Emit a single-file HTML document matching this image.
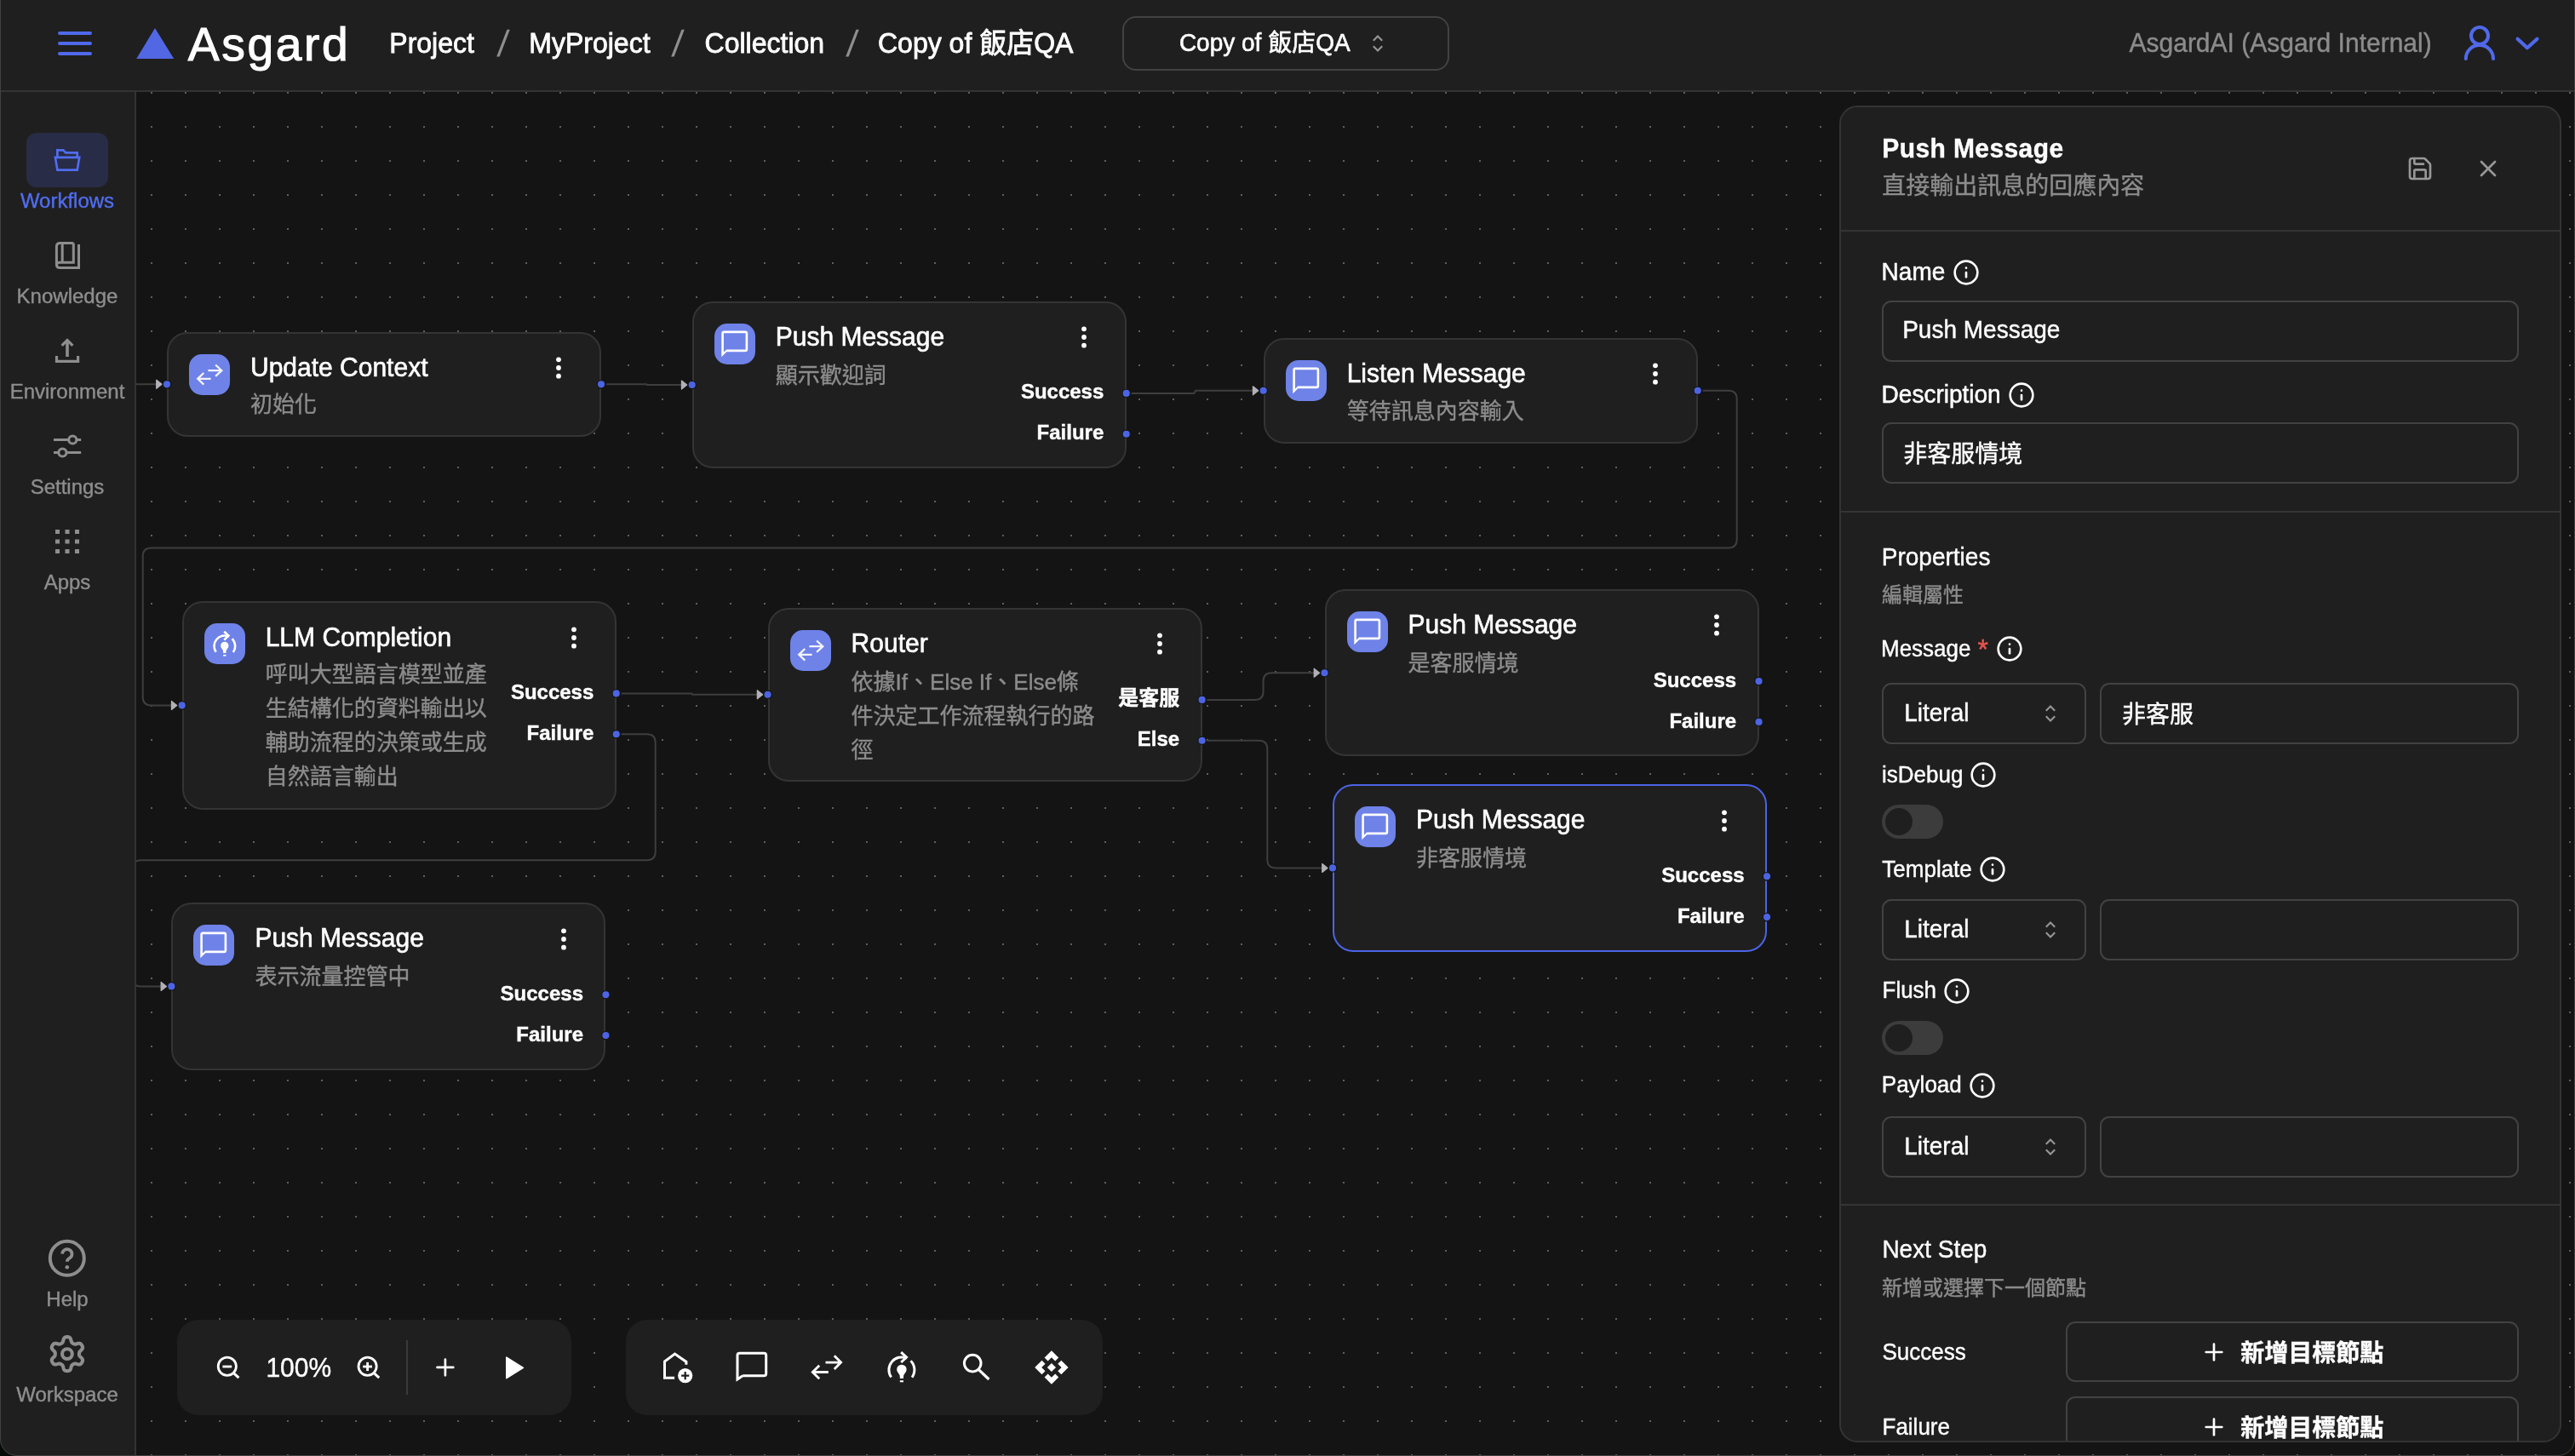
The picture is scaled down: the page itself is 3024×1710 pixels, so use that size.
<!DOCTYPE html>
<html lang="zh-Hant"><head><meta charset="utf-8"><title>Asgard - Copy of 飯店QA</title>
<style>
html,body{margin:0;padding:0;background:#141414;}
body{width:3024px;height:1710px;position:relative;overflow:hidden;font-family:"Liberation Sans","Noto Sans CJK TC",sans-serif;color:#fff;}
.a{position:absolute;box-sizing:border-box;}
#app{position:absolute;left:0;top:0;width:3024px;height:1710px;will-change:transform;}
.t{position:absolute;white-space:nowrap;line-height:1;-webkit-text-stroke:0.4px;}
svg{overflow:visible;}
</style></head><body><div id="app">
<svg class="a" style="left:0;top:0" width="3024" height="1710"><defs><pattern id="dots" x="177" y="108" width="40" height="40" patternUnits="userSpaceOnUse"><circle cx="1" cy="1" r="1" fill="#777"/></pattern></defs><rect x="160" y="108" width="2864" height="1602" fill="url(#dots)"/></svg>
<svg class="a" style="left:0;top:0" width="3024" height="1710"><path d="M146.00 451.35L168.00 451.35L168.00 451.35L190.00 451.35" fill="none" stroke="#3e3e3e" stroke-width="2"/><polygon points="183.75,446.35 190.00,451.35 183.75,456.35" fill="#b1b1b7" stroke="#b1b1b7" stroke-width="1.25" stroke-linejoin="round"/><path d="M712.00 451.35L759.03 451.35Q759.35 451.35 759.35 451.68L759.35 451.68Q759.35 452.00 759.67 452.00L806.70 452.00" fill="none" stroke="#3e3e3e" stroke-width="2"/><polygon points="800.45,447.00 806.70,452.00 800.45,457.00" fill="#b1b1b7" stroke="#b1b1b7" stroke-width="1.25" stroke-linejoin="round"/><path d="M1328.70 461.90L1401.62 461.90Q1403.20 461.90 1403.20 460.32L1403.20 460.32Q1403.20 458.75 1404.78 458.75L1477.70 458.75" fill="none" stroke="#3e3e3e" stroke-width="2"/><polygon points="1471.45,453.75 1477.70,458.75 1471.45,463.75" fill="#b1b1b7" stroke="#b1b1b7" stroke-width="1.25" stroke-linejoin="round"/><path d="M1999.70 458.75L2029.70 458.75Q2039.70 458.75 2039.70 468.75L2039.70 633.58Q2039.70 643.58 2029.70 643.58L177.70 643.58Q167.70 643.58 167.70 653.58L167.70 818.40Q167.70 828.40 177.70 828.40L207.70 828.40" fill="none" stroke="#3e3e3e" stroke-width="2"/><polygon points="201.45,823.40 207.70,828.40 201.45,833.40" fill="#b1b1b7" stroke="#b1b1b7" stroke-width="1.25" stroke-linejoin="round"/><path d="M729.70 814.40L812.00 814.40Q812.65 814.40 812.65 815.05L812.65 815.05Q812.65 815.70 813.30 815.70L895.60 815.70" fill="none" stroke="#3e3e3e" stroke-width="2"/><polygon points="889.35,810.70 895.60,815.70 889.35,820.70" fill="#b1b1b7" stroke="#b1b1b7" stroke-width="1.25" stroke-linejoin="round"/><path d="M729.70 862.20L759.70 862.20Q769.70 862.20 769.70 872.20L769.70 1000.30Q769.70 1010.30 759.70 1010.30L165.40 1010.30Q155.40 1010.30 155.40 1020.30L155.40 1148.40Q155.40 1158.40 165.40 1158.40L195.40 1158.40" fill="none" stroke="#3e3e3e" stroke-width="2"/><polygon points="189.15,1153.40 195.40,1158.40 189.15,1163.40" fill="#b1b1b7" stroke="#b1b1b7" stroke-width="1.25" stroke-linejoin="round"/><path d="M1417.60 821.90L1473.55 821.90Q1483.55 821.90 1483.55 811.90L1483.55 800.20Q1483.55 790.20 1493.55 790.20L1549.50 790.20" fill="none" stroke="#3e3e3e" stroke-width="2"/><polygon points="1543.25,785.20 1549.50,790.20 1543.25,795.20" fill="#b1b1b7" stroke="#b1b1b7" stroke-width="1.25" stroke-linejoin="round"/><path d="M1417.60 869.70L1478.30 869.70Q1488.30 869.70 1488.30 879.70L1488.30 1009.40Q1488.30 1019.40 1498.30 1019.40L1559.00 1019.40" fill="none" stroke="#3e3e3e" stroke-width="2"/><polygon points="1552.75,1014.40 1559.00,1019.40 1552.75,1024.40" fill="#b1b1b7" stroke="#b1b1b7" stroke-width="1.25" stroke-linejoin="round"/></svg>
<div class="a" style="left:196.00px;top:389.60px;width:510.00px;height:123.50px;background:#1f1f1f;border:2px solid #343434;border-radius:24px;"></div>
<div class="a" style="left:222.00px;top:415.60px;width:48.00px;height:48.00px;background:#6e82e8;border-radius:15px;"></div>
<svg class="a" style="left:222.00px;top:415.60px;" width="48" height="48" viewBox="0 0 48 48"><path d="M22.4 19.2H38.3M31.1 12.5L38.3 19.2L31.1 25.9M25.6 28.8H10.2M17.3 22L10.2 28.8L17.3 35.6" fill="none" stroke="#f3f4ff" stroke-width="2.3"/></svg>
<div class="t" style="top:416.90px;font-size:30px;color:#fff;transform:scaleY(1.03);transform-origin:0 25px;left:294.00px;-webkit-text-stroke:0.6px;">Update Context</div>
<div class="t" style="top:461.95px;font-size:26px;color:#8c8c8c;left:294.00px;">初始化</div>
<svg class="a" style="left:651.20px;top:417.00px;" width="10" height="30" viewBox="0 0 10 30"><circle cx="5" cy="5.300000000000001" r="2.9" fill="#fff"/><circle cx="5" cy="15" r="2.9" fill="#fff"/><circle cx="5" cy="24.7" r="2.9" fill="#fff"/></svg>
<div class="a" style="left:812.70px;top:353.70px;width:510.00px;height:196.60px;background:#1f1f1f;border:2px solid #343434;border-radius:24px;"></div>
<div class="a" style="left:838.70px;top:379.70px;width:48.00px;height:48.00px;background:#6e82e8;border-radius:15px;"></div>
<svg class="a" style="left:838.70px;top:379.70px;" width="48" height="48" viewBox="0 0 48 48"><path fill="#fff" fill-rule="evenodd" d="M11.3 8.6H36.2Q39.2 8.6 39.2 11.6V30.200000000000003Q39.2 33.2 36.2 33.2H14.3L8.3 39.2V11.6Q8.3 8.6 11.3 8.6ZM10.9 11.2H36.6V30.6H14.100000000000001L10.9 33.800000000000004Z"/></svg>
<div class="t" style="top:381.00px;font-size:30px;color:#fff;transform:scaleY(1.03);transform-origin:0 25px;left:910.70px;-webkit-text-stroke:0.6px;">Push Message</div>
<div class="t" style="top:427.85px;font-size:26px;color:#8c8c8c;left:910.70px;">顯示歡迎詞</div>
<svg class="a" style="left:1267.90px;top:381.10px;" width="10" height="30" viewBox="0 0 10 30"><circle cx="5" cy="5.300000000000001" r="2.9" fill="#fff"/><circle cx="5" cy="15" r="2.9" fill="#fff"/><circle cx="5" cy="24.7" r="2.9" fill="#fff"/></svg>
<div class="t" style="top:448.30px;font-size:24px;color:#fff;transform:scaleY(1.03);transform-origin:100% 20px;font-weight:700;right:1727.70px;">Success</div>
<div class="t" style="top:496.30px;font-size:24px;color:#fff;transform:scaleY(1.03);transform-origin:100% 20px;font-weight:700;right:1727.70px;">Failure</div>
<div class="a" style="left:1483.70px;top:397.00px;width:510.00px;height:123.50px;background:#1f1f1f;border:2px solid #343434;border-radius:24px;"></div>
<div class="a" style="left:1509.70px;top:423.00px;width:48.00px;height:48.00px;background:#6e82e8;border-radius:15px;"></div>
<svg class="a" style="left:1509.70px;top:423.00px;" width="48" height="48" viewBox="0 0 48 48"><path fill="#fff" fill-rule="evenodd" d="M11.3 8.6H36.2Q39.2 8.6 39.2 11.6V30.200000000000003Q39.2 33.2 36.2 33.2H14.3L8.3 39.2V11.6Q8.3 8.6 11.3 8.6ZM10.9 11.2H36.6V30.6H14.100000000000001L10.9 33.800000000000004Z"/></svg>
<div class="t" style="top:424.30px;font-size:30px;color:#fff;transform:scaleY(1.03);transform-origin:0 25px;left:1581.70px;-webkit-text-stroke:0.6px;">Listen Message</div>
<div class="t" style="top:469.85px;font-size:26px;color:#8c8c8c;left:1581.70px;">等待訊息內容輸入</div>
<svg class="a" style="left:1938.90px;top:424.40px;" width="10" height="30" viewBox="0 0 10 30"><circle cx="5" cy="5.300000000000001" r="2.9" fill="#fff"/><circle cx="5" cy="15" r="2.9" fill="#fff"/><circle cx="5" cy="24.7" r="2.9" fill="#fff"/></svg>
<div class="a" style="left:213.70px;top:706.20px;width:510.00px;height:244.40px;background:#1f1f1f;border:2px solid #343434;border-radius:24px;"></div>
<div class="a" style="left:239.70px;top:732.20px;width:48.00px;height:48.00px;background:#6e82e8;border-radius:15px;"></div>
<svg class="a" style="left:239.70px;top:732.20px;" width="48" height="48" viewBox="0 0 48 48"><path d="M13.72 33.85A12.30 12.30 0 0 1 28.80 15.56" fill="none" stroke="#fff" stroke-width="2.6"/><path d="M32.50 18.10A12.30 12.30 0 0 1 33.75 34.03" fill="none" stroke="#fff" stroke-width="2.6"/><path d="M23.20 9.70L28.40 14.60L23.20 19.50" fill="none" stroke="#fff" stroke-width="2.6"/><path d="M19.10 26.40a4.70 4.70 0 0 1 9.40 0c0 2.40 -2.10 3.60 -2.80 5.60l-0.30 3.00h-3.20l-0.30 -3.00c-0.70 -2.00 -2.80 -3.20 -2.80 -5.60z" fill="#fff"/><rect x="22.10" y="36.90" width="3.40" height="1.70" fill="#fff"/></svg>
<div class="t" style="top:733.50px;font-size:30px;color:#fff;transform:scaleY(1.03);transform-origin:0 25px;left:311.70px;-webkit-text-stroke:0.6px;">LLM Completion</div>
<div class="t" style="top:779.15px;font-size:26px;color:#8c8c8c;left:311.70px;">呼叫大型語言模型並產</div>
<div class="t" style="top:819.15px;font-size:26px;color:#8c8c8c;left:311.70px;">生結構化的資料輸出以</div>
<div class="t" style="top:859.15px;font-size:26px;color:#8c8c8c;left:311.70px;">輔助流程的決策或生成</div>
<div class="t" style="top:899.15px;font-size:26px;color:#8c8c8c;left:311.70px;">自然語言輸出</div>
<svg class="a" style="left:668.90px;top:733.60px;" width="10" height="30" viewBox="0 0 10 30"><circle cx="5" cy="5.300000000000001" r="2.9" fill="#fff"/><circle cx="5" cy="15" r="2.9" fill="#fff"/><circle cx="5" cy="24.7" r="2.9" fill="#fff"/></svg>
<div class="t" style="top:800.80px;font-size:24px;color:#fff;transform:scaleY(1.03);transform-origin:100% 20px;font-weight:700;right:2326.70px;">Success</div>
<div class="t" style="top:848.80px;font-size:24px;color:#fff;transform:scaleY(1.03);transform-origin:100% 20px;font-weight:700;right:2326.70px;">Failure</div>
<div class="a" style="left:901.60px;top:713.70px;width:510.00px;height:204.00px;background:#1f1f1f;border:2px solid #343434;border-radius:24px;"></div>
<div class="a" style="left:927.60px;top:739.70px;width:48.00px;height:48.00px;background:#6e82e8;border-radius:15px;"></div>
<svg class="a" style="left:927.60px;top:739.70px;" width="48" height="48" viewBox="0 0 48 48"><path d="M22.4 19.2H38.3M31.1 12.5L38.3 19.2L31.1 25.9M25.6 28.8H10.2M17.3 22L10.2 28.8L17.3 35.6" fill="none" stroke="#f3f4ff" stroke-width="2.3"/></svg>
<div class="t" style="top:741.00px;font-size:30px;color:#fff;transform:scaleY(1.03);transform-origin:0 25px;left:999.60px;-webkit-text-stroke:0.6px;">Router</div>
<div class="t" style="top:787.55px;font-size:26px;color:#8c8c8c;left:999.60px;">依據If、Else If、Else條</div>
<div class="t" style="top:827.55px;font-size:26px;color:#8c8c8c;left:999.60px;">件決定工作流程執行的路</div>
<div class="t" style="top:867.55px;font-size:26px;color:#8c8c8c;left:999.60px;">徑</div>
<svg class="a" style="left:1356.80px;top:741.10px;" width="10" height="30" viewBox="0 0 10 30"><circle cx="5" cy="5.300000000000001" r="2.9" fill="#fff"/><circle cx="5" cy="15" r="2.9" fill="#fff"/><circle cx="5" cy="24.7" r="2.9" fill="#fff"/></svg>
<div class="t" style="top:808.30px;font-size:24px;color:#fff;font-weight:700;right:1638.80px;">是客服</div>
<div class="t" style="top:856.30px;font-size:24px;color:#fff;transform:scaleY(1.03);transform-origin:100% 20px;font-weight:700;right:1638.80px;">Else</div>
<div class="a" style="left:1555.50px;top:691.90px;width:510.00px;height:196.60px;background:#1f1f1f;border:2px solid #343434;border-radius:24px;"></div>
<div class="a" style="left:1581.50px;top:717.90px;width:48.00px;height:48.00px;background:#6e82e8;border-radius:15px;"></div>
<svg class="a" style="left:1581.50px;top:717.90px;" width="48" height="48" viewBox="0 0 48 48"><path fill="#fff" fill-rule="evenodd" d="M11.3 8.6H36.2Q39.2 8.6 39.2 11.6V30.200000000000003Q39.2 33.2 36.2 33.2H14.3L8.3 39.2V11.6Q8.3 8.6 11.3 8.6ZM10.9 11.2H36.6V30.6H14.100000000000001L10.9 33.800000000000004Z"/></svg>
<div class="t" style="top:719.20px;font-size:30px;color:#fff;transform:scaleY(1.03);transform-origin:0 25px;left:1653.50px;-webkit-text-stroke:0.6px;">Push Message</div>
<div class="t" style="top:766.05px;font-size:26px;color:#8c8c8c;left:1653.50px;">是客服情境</div>
<svg class="a" style="left:2010.70px;top:719.30px;" width="10" height="30" viewBox="0 0 10 30"><circle cx="5" cy="5.300000000000001" r="2.9" fill="#fff"/><circle cx="5" cy="15" r="2.9" fill="#fff"/><circle cx="5" cy="24.7" r="2.9" fill="#fff"/></svg>
<div class="t" style="top:786.50px;font-size:24px;color:#fff;transform:scaleY(1.03);transform-origin:100% 20px;font-weight:700;right:984.90px;">Success</div>
<div class="t" style="top:834.50px;font-size:24px;color:#fff;transform:scaleY(1.03);transform-origin:100% 20px;font-weight:700;right:984.90px;">Failure</div>
<div class="a" style="left:1565.00px;top:921.10px;width:510.00px;height:196.60px;background:#1f1f1f;border:2px solid #4c64e6;border-radius:24px;"></div>
<div class="a" style="left:1591.00px;top:947.10px;width:48.00px;height:48.00px;background:#6e82e8;border-radius:15px;"></div>
<svg class="a" style="left:1591.00px;top:947.10px;" width="48" height="48" viewBox="0 0 48 48"><path fill="#fff" fill-rule="evenodd" d="M11.3 8.6H36.2Q39.2 8.6 39.2 11.6V30.200000000000003Q39.2 33.2 36.2 33.2H14.3L8.3 39.2V11.6Q8.3 8.6 11.3 8.6ZM10.9 11.2H36.6V30.6H14.100000000000001L10.9 33.800000000000004Z"/></svg>
<div class="t" style="top:948.40px;font-size:30px;color:#fff;transform:scaleY(1.03);transform-origin:0 25px;left:1663.00px;-webkit-text-stroke:0.6px;">Push Message</div>
<div class="t" style="top:995.25px;font-size:26px;color:#8c8c8c;left:1663.00px;">非客服情境</div>
<svg class="a" style="left:2020.20px;top:948.50px;" width="10" height="30" viewBox="0 0 10 30"><circle cx="5" cy="5.300000000000001" r="2.9" fill="#fff"/><circle cx="5" cy="15" r="2.9" fill="#fff"/><circle cx="5" cy="24.7" r="2.9" fill="#fff"/></svg>
<div class="t" style="top:1015.70px;font-size:24px;color:#fff;transform:scaleY(1.03);transform-origin:100% 20px;font-weight:700;right:975.40px;">Success</div>
<div class="t" style="top:1063.70px;font-size:24px;color:#fff;transform:scaleY(1.03);transform-origin:100% 20px;font-weight:700;right:975.40px;">Failure</div>
<div class="a" style="left:201.40px;top:1060.10px;width:510.00px;height:196.60px;background:#1f1f1f;border:2px solid #343434;border-radius:24px;"></div>
<div class="a" style="left:227.40px;top:1086.10px;width:48.00px;height:48.00px;background:#6e82e8;border-radius:15px;"></div>
<svg class="a" style="left:227.40px;top:1086.10px;" width="48" height="48" viewBox="0 0 48 48"><path fill="#fff" fill-rule="evenodd" d="M11.3 8.6H36.2Q39.2 8.6 39.2 11.6V30.200000000000003Q39.2 33.2 36.2 33.2H14.3L8.3 39.2V11.6Q8.3 8.6 11.3 8.6ZM10.9 11.2H36.6V30.6H14.100000000000001L10.9 33.800000000000004Z"/></svg>
<div class="t" style="top:1087.40px;font-size:30px;color:#fff;transform:scaleY(1.03);transform-origin:0 25px;left:299.40px;-webkit-text-stroke:0.6px;">Push Message</div>
<div class="t" style="top:1134.25px;font-size:26px;color:#8c8c8c;left:299.40px;">表示流量控管中</div>
<svg class="a" style="left:656.60px;top:1087.50px;" width="10" height="30" viewBox="0 0 10 30"><circle cx="5" cy="5.300000000000001" r="2.9" fill="#fff"/><circle cx="5" cy="15" r="2.9" fill="#fff"/><circle cx="5" cy="24.7" r="2.9" fill="#fff"/></svg>
<div class="t" style="top:1154.70px;font-size:24px;color:#fff;transform:scaleY(1.03);transform-origin:100% 20px;font-weight:700;right:2339.00px;">Success</div>
<div class="t" style="top:1202.70px;font-size:24px;color:#fff;transform:scaleY(1.03);transform-origin:100% 20px;font-weight:700;right:2339.00px;">Failure</div>
<svg class="a" style="left:0;top:0" width="3024" height="1710"><circle cx="196.00" cy="451.35" r="4.7" fill="#4c64e4" stroke="#171717" stroke-width="1.3"/><circle cx="706.00" cy="451.35" r="4.7" fill="#4c64e4" stroke="#171717" stroke-width="1.3"/><circle cx="812.70" cy="452.00" r="4.7" fill="#4c64e4" stroke="#171717" stroke-width="1.3"/><circle cx="1322.70" cy="461.90" r="4.7" fill="#4c64e4" stroke="#171717" stroke-width="1.3"/><circle cx="1322.70" cy="509.70" r="4.7" fill="#4c64e4" stroke="#171717" stroke-width="1.3"/><circle cx="1483.70" cy="458.75" r="4.7" fill="#4c64e4" stroke="#171717" stroke-width="1.3"/><circle cx="1993.70" cy="458.75" r="4.7" fill="#4c64e4" stroke="#171717" stroke-width="1.3"/><circle cx="213.70" cy="828.40" r="4.7" fill="#4c64e4" stroke="#171717" stroke-width="1.3"/><circle cx="723.70" cy="814.40" r="4.7" fill="#4c64e4" stroke="#171717" stroke-width="1.3"/><circle cx="723.70" cy="862.20" r="4.7" fill="#4c64e4" stroke="#171717" stroke-width="1.3"/><circle cx="901.60" cy="815.70" r="4.7" fill="#4c64e4" stroke="#171717" stroke-width="1.3"/><circle cx="1411.60" cy="821.90" r="4.7" fill="#4c64e4" stroke="#171717" stroke-width="1.3"/><circle cx="1411.60" cy="869.70" r="4.7" fill="#4c64e4" stroke="#171717" stroke-width="1.3"/><circle cx="1555.50" cy="790.20" r="4.7" fill="#4c64e4" stroke="#171717" stroke-width="1.3"/><circle cx="2065.50" cy="800.10" r="4.7" fill="#4c64e4" stroke="#171717" stroke-width="1.3"/><circle cx="2065.50" cy="847.90" r="4.7" fill="#4c64e4" stroke="#171717" stroke-width="1.3"/><circle cx="1565.00" cy="1019.40" r="4.7" fill="#4c64e4" stroke="#171717" stroke-width="1.3"/><circle cx="2075.00" cy="1029.30" r="4.7" fill="#4c64e4" stroke="#171717" stroke-width="1.3"/><circle cx="2075.00" cy="1077.10" r="4.7" fill="#4c64e4" stroke="#171717" stroke-width="1.3"/><circle cx="201.40" cy="1158.40" r="4.7" fill="#4c64e4" stroke="#171717" stroke-width="1.3"/><circle cx="711.40" cy="1168.30" r="4.7" fill="#4c64e4" stroke="#171717" stroke-width="1.3"/><circle cx="711.40" cy="1216.10" r="4.7" fill="#4c64e4" stroke="#171717" stroke-width="1.3"/></svg>
<div class="a" style="left:208.20px;top:1549.90px;width:463.00px;height:112.00px;background:#1f1f1f;border-radius:25px;"></div>
<div class="a" style="left:735.00px;top:1549.90px;width:560.00px;height:112.00px;background:#1f1f1f;border-radius:25px;"></div>
<svg class="a" style="left:0;top:0" width="3024" height="1710"><circle cx="266.8" cy="1604.8" r="10.6" fill="none" stroke="#fff" stroke-width="2.8"/><path d="M274.40 1612.70L280.40 1618.20" stroke="#fff" stroke-width="3" fill="none"/><path d="M261.40 1605.00H272.20" stroke="#fff" stroke-width="2.8" fill="none"/><circle cx="431.6" cy="1604.8" r="10.6" fill="none" stroke="#fff" stroke-width="2.8"/><path d="M439.20 1612.70L445.20 1618.20" stroke="#fff" stroke-width="3" fill="none"/><path d="M426.20 1605.00H437.00" stroke="#fff" stroke-width="2.8" fill="none"/><path d="M431.60 1599.90V1610.10" stroke="#fff" stroke-width="2.8" fill="none"/><rect x="477" y="1574" width="2" height="64" fill="#3a3a3a"/><path d="M513.5 1605.9H532.3M522.9 1596.5V1615.3" stroke="#fff" stroke-width="2.7" stroke-linecap="round" fill="none"/><path d="M594.8 1594.2V1618.6L614.4 1606.4Z" fill="#fff" stroke="#fff" stroke-width="1.6" stroke-linejoin="round"/><path d="M805.9 1602.8V1599.4L792.5 1590L780.5 1599V1618.2H792.1" fill="none" stroke="#fff" stroke-width="3" stroke-linejoin="miter"/><circle cx="804.7" cy="1615.6" r="8.6" fill="#fff"/><path d="M800.1 1615.6H809.3M804.7 1611V1620.2" stroke="#1f1f1f" stroke-width="2.2" fill="none"/><path d="M872.2 1615.8H897.2Q899.7 1615.8 899.7 1613.3V1591.7Q899.7 1589.2 897.2 1589.2H868.5Q866 1589.2 866 1591.7V1620L872.2 1615.8" fill="none" stroke="#fff" stroke-width="3" stroke-linejoin="miter"/><path d="M969.5 1600.1H987.6M979.8 1592.3L987.6 1600.1L979.8 1607.9M972.8 1611.5H954.3M962.2 1603.7L954.3 1611.5L962.2 1619.3" fill="none" stroke="#fff" stroke-width="2.8"/><path d="M1046.61 1617.50A15.00 15.00 0 0 1 1065.00 1595.20" fill="none" stroke="#fff" stroke-width="3.0"/><path d="M1069.51 1598.29A15.00 15.00 0 0 1 1071.04 1617.72" fill="none" stroke="#fff" stroke-width="3.0"/><path d="M1058.17 1588.05L1064.51 1594.02L1058.17 1600.00" fill="none" stroke="#fff" stroke-width="3.0"/><path d="M1053.17 1608.41a5.73 5.73 0 0 1 11.46 0c0 2.93 -2.56 4.39 -3.41 6.83l-0.37 3.66h-3.90l-0.37 -3.66c-0.85 -2.44 -3.41 -3.90 -3.41 -6.83z" fill="#fff"/><rect x="1056.83" y="1621.22" width="4.15" height="2.07" fill="#fff"/><circle cx="1142.2" cy="1601.1" r="9.8" fill="none" stroke="#fff" stroke-width="3"/><path d="M1149.4 1608.6L1161.4 1620" stroke="#fff" stroke-width="3.2" fill="none"/><polygon points="1234.90,1586.30 1243.20,1594.60 1239.20,1598.60 1234.90,1594.30 1230.60,1598.60 1226.60,1594.60" fill="#fff"/><polygon points="1254.60,1606.00 1246.30,1614.30 1242.30,1610.30 1246.60,1606.00 1242.30,1601.70 1246.30,1597.70" fill="#fff"/><polygon points="1234.90,1625.70 1226.60,1617.40 1230.60,1613.40 1234.90,1617.70 1239.20,1613.40 1243.20,1617.40" fill="#fff"/><polygon points="1215.20,1606.00 1223.50,1597.70 1227.50,1601.70 1223.20,1606.00 1227.50,1610.30 1223.50,1614.30" fill="#fff"/><polygon points="1234.90,1600.90 1240.00,1606.00 1234.90,1611.10 1229.80,1606.00" fill="#fff"/></svg>
<div class="t" style="top:1591.80px;font-size:30px;color:#fff;transform:scaleY(1.03);transform-origin:0 25px;left:312.40px;">100%</div>
<div class="a" style="left:2160px;top:124px;width:848px;height:1570px;background:#1f1f1f;border:2px solid #343434;border-radius:21px;overflow:hidden;"><div class="a" style="left:-2162px;top:-126px;width:3024px;height:1710px;">
<div class="t" style="top:160.00px;font-size:30px;color:#fff;transform:scaleY(1.03);transform-origin:0 25px;font-weight:700;letter-spacing:0.4px;left:2210.30px;">Push Message</div>
<div class="t" style="top:204.80px;font-size:28px;color:#8c8c8c;left:2210.30px;">直接輸出訊息的回應內容</div>
<svg class="a" style="left:2826.20px;top:182.20px" width="32" height="32" viewBox="0 0 24 24" fill="none" stroke="#979797" stroke-width="2" stroke-linecap="round" stroke-linejoin="round"><path d="M15.2 3a2 2 0 0 1 1.4.6l3.8 3.8a2 2 0 0 1 .6 1.4V19a2 2 0 0 1-2 2H5a2 2 0 0 1-2-2V5a2 2 0 0 1 2-2z"/><path d="M17 21v-7a1 1 0 0 0-1-1H8a1 1 0 0 0-1 1v7"/><path d="M7 3v4a1 1 0 0 0 1 1h7"/></svg>
<svg class="a" style="left:2906.10px;top:182.20px" width="32" height="32" viewBox="0 0 24 24" fill="none" stroke="#979797" stroke-width="2" stroke-linecap="round" stroke-linejoin="round"><path d="M18 6 6 18"/><path d="m6 6 12 12"/></svg>
<div class="a" style="left:2162.00px;top:270.00px;width:844.00px;height:2.00px;background:#343434;"></div>
<div class="t" style="top:305.70px;font-size:28px;color:#fff;transform:scaleY(1.03);transform-origin:0 23px;left:2209.60px;-webkit-text-stroke:0.5px;">Name</div>
<svg class="a" style="left:2292.90px;top:303.90px" width="32" height="32" viewBox="0 0 24 24" fill="none" stroke="#fff" stroke-width="2" stroke-linecap="round" stroke-linejoin="round"><circle cx="12" cy="12" r="10"/><path d="M12 16v-4"/><path d="M12 8h.01"/></svg>
<div class="a" style="left:2210.00px;top:352.50px;width:748.00px;height:72.00px;border:2px solid #424242;border-radius:11px;"></div>
<div class="t" style="top:374.10px;font-size:28px;color:#fff;transform:scaleY(1.03);transform-origin:0 23px;left:2234.20px;">Push Message</div>
<div class="t" style="top:450.20px;font-size:28px;color:#fff;transform:scaleY(1.03);transform-origin:0 23px;left:2209.60px;-webkit-text-stroke:0.5px;">Description</div>
<svg class="a" style="left:2358.10px;top:448.20px" width="32" height="32" viewBox="0 0 24 24" fill="none" stroke="#fff" stroke-width="2" stroke-linecap="round" stroke-linejoin="round"><circle cx="12" cy="12" r="10"/><path d="M12 16v-4"/><path d="M12 8h.01"/></svg>
<div class="a" style="left:2210.00px;top:496.20px;width:748.00px;height:72.00px;border:2px solid #424242;border-radius:11px;"></div>
<div class="t" style="top:519.90px;font-size:28px;color:#fff;left:2235.30px;">非客服情境</div>
<div class="a" style="left:2162.00px;top:600.00px;width:844.00px;height:2.00px;background:#343434;"></div>
<div class="t" style="top:640.70px;font-size:28px;color:#fff;transform:scaleY(1.03);transform-origin:0 23px;left:2209.80px;">Properties</div>
<div class="t" style="top:686.60px;font-size:24px;color:#8c8c8c;left:2210.00px;">編輯屬性</div>
<div class="t" style="top:749.30px;font-size:26px;color:#fff;transform:scaleY(1.03);transform-origin:0 22px;left:2209.00px;">Message</div>
<div class="t" style="top:746.70px;font-size:32px;color:#e5554f;transform:scaleY(1.03);transform-origin:0 27px;left:2322.50px;">*</div>
<svg class="a" style="left:2343.80px;top:746.20px" width="32" height="32" viewBox="0 0 24 24" fill="none" stroke="#fff" stroke-width="2" stroke-linecap="round" stroke-linejoin="round"><circle cx="12" cy="12" r="10"/><path d="M12 16v-4"/><path d="M12 8h.01"/></svg>
<div class="a" style="left:2210.00px;top:802.00px;width:239.50px;height:72.00px;border:2px solid #424242;border-radius:11px;"></div>
<div class="a" style="left:2466.30px;top:802.00px;width:491.70px;height:72.00px;border:2px solid #424242;border-radius:11px;"></div>
<div class="t" style="top:824.00px;font-size:28px;color:#fff;transform:scaleY(1.03);transform-origin:0 23px;left:2236.20px;">Literal</div>
<svg class="a" style="left:2400.00px;top:826.00px;" width="16" height="24" viewBox="0 0 16 24"><path d="M2.8 8.7L8 3.5L13.2 8.7M2.8 15.3L8 20.5L13.2 15.3" fill="none" stroke="#969696" stroke-width="2.1"/></svg>
<div class="t" style="top:826.10px;font-size:28px;color:#fff;left:2491.90px;">非客服</div>
<div class="t" style="top:896.60px;font-size:26px;color:#fff;transform:scaleY(1.03);transform-origin:0 22px;left:2210.00px;">isDebug</div>
<svg class="a" style="left:2312.90px;top:893.70px" width="32" height="32" viewBox="0 0 24 24" fill="none" stroke="#fff" stroke-width="2" stroke-linecap="round" stroke-linejoin="round"><circle cx="12" cy="12" r="10"/><path d="M12 16v-4"/><path d="M12 8h.01"/></svg>
<div class="a" style="left:2210.20px;top:945.20px;width:72.00px;height:40.00px;background:#3c3c3c;border-radius:20px;"></div>
<div class="a" style="left:2214.20px;top:949.20px;width:32.00px;height:32.00px;background:#1f1f1f;border-radius:16px;"></div>
<div class="t" style="top:1007.50px;font-size:26px;color:#fff;transform:scaleY(1.03);transform-origin:0 22px;left:2210.30px;">Template</div>
<svg class="a" style="left:2323.70px;top:1004.50px" width="32" height="32" viewBox="0 0 24 24" fill="none" stroke="#fff" stroke-width="2" stroke-linecap="round" stroke-linejoin="round"><circle cx="12" cy="12" r="10"/><path d="M12 16v-4"/><path d="M12 8h.01"/></svg>
<div class="a" style="left:2210.00px;top:1056.40px;width:239.50px;height:72.00px;border:2px solid #424242;border-radius:11px;"></div>
<div class="a" style="left:2466.30px;top:1056.40px;width:491.70px;height:72.00px;border:2px solid #424242;border-radius:11px;"></div>
<div class="t" style="top:1078.40px;font-size:28px;color:#fff;transform:scaleY(1.03);transform-origin:0 23px;left:2236.20px;">Literal</div>
<svg class="a" style="left:2400.00px;top:1080.40px;" width="16" height="24" viewBox="0 0 16 24"><path d="M2.8 8.7L8 3.5L13.2 8.7M2.8 15.3L8 20.5L13.2 15.3" fill="none" stroke="#969696" stroke-width="2.1"/></svg>
<div class="t" style="top:1150.00px;font-size:26px;color:#fff;transform:scaleY(1.03);transform-origin:0 22px;left:2210.50px;">Flush</div>
<svg class="a" style="left:2281.80px;top:1147.70px" width="32" height="32" viewBox="0 0 24 24" fill="none" stroke="#fff" stroke-width="2" stroke-linecap="round" stroke-linejoin="round"><circle cx="12" cy="12" r="10"/><path d="M12 16v-4"/><path d="M12 8h.01"/></svg>
<div class="a" style="left:2210.20px;top:1199.30px;width:72.00px;height:40.00px;background:#3c3c3c;border-radius:20px;"></div>
<div class="a" style="left:2214.20px;top:1203.30px;width:32.00px;height:32.00px;background:#1f1f1f;border-radius:16px;"></div>
<div class="t" style="top:1261.10px;font-size:26px;color:#fff;transform:scaleY(1.03);transform-origin:0 22px;left:2209.80px;">Payload</div>
<svg class="a" style="left:2312.00px;top:1258.70px" width="32" height="32" viewBox="0 0 24 24" fill="none" stroke="#fff" stroke-width="2" stroke-linecap="round" stroke-linejoin="round"><circle cx="12" cy="12" r="10"/><path d="M12 16v-4"/><path d="M12 8h.01"/></svg>
<div class="a" style="left:2210.00px;top:1310.80px;width:239.50px;height:72.00px;border:2px solid #424242;border-radius:11px;"></div>
<div class="a" style="left:2466.30px;top:1310.80px;width:491.70px;height:72.00px;border:2px solid #424242;border-radius:11px;"></div>
<div class="t" style="top:1332.80px;font-size:28px;color:#fff;transform:scaleY(1.03);transform-origin:0 23px;left:2236.20px;">Literal</div>
<svg class="a" style="left:2400.00px;top:1334.80px;" width="16" height="24" viewBox="0 0 16 24"><path d="M2.8 8.7L8 3.5L13.2 8.7M2.8 15.3L8 20.5L13.2 15.3" fill="none" stroke="#969696" stroke-width="2.1"/></svg>
<div class="a" style="left:2162.00px;top:1414.00px;width:844.00px;height:2.00px;background:#343434;"></div>
<div class="t" style="top:1454.10px;font-size:28px;color:#fff;transform:scaleY(1.03);transform-origin:0 23px;left:2210.40px;">Next Step</div>
<div class="t" style="top:1500.50px;font-size:24px;color:#8c8c8c;left:2210.00px;">新增或選擇下一個節點</div>
<div class="t" style="top:1575.00px;font-size:26px;color:#fff;transform:scaleY(1.03);transform-origin:0 22px;left:2210.50px;">Success</div>
<div class="a" style="left:2426.40px;top:1552.20px;width:531.60px;height:71.30px;border:2px solid #424242;border-radius:11px;"></div>
<svg class="a" style="left:2583.50px;top:1572.20px" width="32" height="32" viewBox="0 0 24 24" fill="none" stroke="#fff" stroke-width="2" stroke-linecap="round" stroke-linejoin="round"><path d="M5 12h14"/><path d="M12 5v14"/></svg>
<div class="t" style="top:1575.70px;font-size:28px;color:#fff;font-weight:700;left:2631.20px;">新增目標節點</div>
<div class="t" style="top:1663.20px;font-size:26px;color:#fff;transform:scaleY(1.03);transform-origin:0 22px;left:2210.50px;">Failure</div>
<div class="a" style="left:2426.40px;top:1640.40px;width:531.60px;height:71.30px;border:2px solid #424242;border-radius:11px;"></div>
<svg class="a" style="left:2583.50px;top:1660.40px" width="32" height="32" viewBox="0 0 24 24" fill="none" stroke="#fff" stroke-width="2" stroke-linecap="round" stroke-linejoin="round"><path d="M5 12h14"/><path d="M12 5v14"/></svg>
<div class="t" style="top:1663.90px;font-size:28px;color:#fff;font-weight:700;left:2631.20px;">新增目標節點</div>
</div></div>
<div class="a" style="left:0.00px;top:108.00px;width:160.00px;height:1602.00px;background:#1f1f1f;border-right:2px solid #333333;"></div>
<div class="a" style="left:30.80px;top:156.00px;width:96.50px;height:64.00px;background:#282c46;border-radius:12px;"></div>
<svg class="a" style="left:0;top:0" width="160" height="1710"><path d="M67.35 184.6V176.35H74.3L77.1 179.35H90.75V184.6" fill="none" stroke="#506cf0" stroke-width="2.7"/><path d="M64.9 184.85H93.2L90.7 199.65H67.4Z" fill="none" stroke="#506cf0" stroke-width="2.7"/><path d="M86.3 285.5H70.4Q66.4 285.5 66.4 289.5V310.5Q66.4 314.5 70.4 314.5H92.5V287M86.3 285.5V308.3H70Q66.4 308.3 66.4 311.4M73.2 285.5V308.3" fill="none" stroke="#8e8e8e" stroke-width="3"/><path d="M66.5 418V424.4H91.6V418" fill="none" stroke="#8e8e8e" stroke-width="3.2"/><path d="M79 400V419" stroke="#8e8e8e" stroke-width="3.6"/><path d="M72.6 405.9L79 399.5L85.4 405.9" fill="none" stroke="#8e8e8e" stroke-width="3.2"/><path d="M63 516.5H95.2M63 531.5H95.2" stroke="#8e8e8e" stroke-width="3.1"/><circle cx="85.3" cy="516.5" r="4.6" fill="#1f1f1f" stroke="#8e8e8e" stroke-width="3"/><circle cx="73.4" cy="531.5" r="4.6" fill="#1f1f1f" stroke="#8e8e8e" stroke-width="3"/><rect x="65" y="622" width="5" height="5" fill="#8e8e8e"/><rect x="65" y="633.5" width="5" height="5" fill="#8e8e8e"/><rect x="65" y="645" width="5" height="5" fill="#8e8e8e"/><rect x="76.5" y="622" width="5" height="5" fill="#8e8e8e"/><rect x="76.5" y="633.5" width="5" height="5" fill="#8e8e8e"/><rect x="76.5" y="645" width="5" height="5" fill="#8e8e8e"/><rect x="88" y="622" width="5" height="5" fill="#8e8e8e"/><rect x="88" y="633.5" width="5" height="5" fill="#8e8e8e"/><rect x="88" y="645" width="5" height="5" fill="#8e8e8e"/><circle cx="78.8" cy="1477.8" r="20" fill="none" stroke="#8e8e8e" stroke-width="4"/><path d="M73.1 1472.6a5.7 5.7 0 1 1 8.6 5.1c-1.8 1-2.9 2-2.9 4.1" fill="none" stroke="#8e8e8e" stroke-width="3.7"/><circle cx="78.8" cy="1488.2" r="2.3" fill="#8e8e8e"/><polygon points="93.00,1590.10 93.00,1590.47 93.02,1590.84 93.06,1591.21 93.12,1591.59 93.23,1591.99 93.42,1592.40 93.71,1592.84 94.14,1593.34 94.72,1593.90 95.37,1594.51 96.00,1595.17 96.51,1595.82 96.85,1596.45 97.02,1597.05 97.05,1597.62 96.99,1598.15 96.86,1598.67 96.68,1599.16 96.47,1599.64 96.22,1600.10 95.94,1600.54 95.64,1600.97 95.30,1601.37 94.92,1601.74 94.49,1602.06 93.98,1602.31 93.38,1602.46 92.66,1602.49 91.84,1602.38 90.96,1602.16 90.10,1601.90 89.33,1601.68 88.68,1601.55 88.15,1601.52 87.70,1601.57 87.30,1601.67 86.94,1601.80 86.60,1601.96 86.27,1602.13 85.95,1602.31 85.63,1602.50 85.32,1602.70 85.01,1602.92 84.71,1603.16 84.43,1603.45 84.17,1603.82 83.93,1604.30 83.72,1604.92 83.52,1605.70 83.31,1606.57 83.06,1607.44 82.75,1608.21 82.37,1608.82 81.94,1609.27 81.46,1609.58 80.97,1609.80 80.46,1609.94 79.94,1610.03 79.42,1610.08 78.90,1610.10 78.38,1610.08 77.86,1610.03 77.34,1609.94 76.83,1609.80 76.34,1609.58 75.86,1609.27 75.43,1608.82 75.05,1608.21 74.74,1607.44 74.49,1606.57 74.28,1605.70 74.08,1604.92 73.87,1604.30 73.63,1603.82 73.37,1603.45 73.09,1603.16 72.79,1602.92 72.48,1602.70 72.17,1602.50 71.85,1602.31 71.53,1602.13 71.20,1601.96 70.86,1601.80 70.50,1601.67 70.10,1601.57 69.65,1601.52 69.12,1601.55 68.47,1601.68 67.70,1601.90 66.84,1602.16 65.96,1602.38 65.14,1602.49 64.42,1602.46 63.82,1602.31 63.31,1602.06 62.88,1601.74 62.50,1601.37 62.16,1600.97 61.86,1600.54 61.58,1600.10 61.33,1599.64 61.12,1599.16 60.94,1598.67 60.81,1598.15 60.75,1597.62 60.78,1597.05 60.95,1596.45 61.29,1595.82 61.80,1595.17 62.43,1594.51 63.08,1593.90 63.66,1593.34 64.09,1592.84 64.38,1592.40 64.57,1591.99 64.68,1591.59 64.74,1591.21 64.78,1590.84 64.80,1590.47 64.80,1590.10 64.80,1589.73 64.78,1589.36 64.74,1588.99 64.68,1588.61 64.57,1588.21 64.38,1587.80 64.09,1587.36 63.66,1586.86 63.08,1586.30 62.43,1585.69 61.80,1585.03 61.29,1584.38 60.95,1583.75 60.78,1583.15 60.75,1582.58 60.81,1582.05 60.94,1581.53 61.12,1581.04 61.33,1580.56 61.58,1580.10 61.86,1579.66 62.16,1579.23 62.50,1578.83 62.88,1578.46 63.31,1578.14 63.82,1577.89 64.42,1577.74 65.14,1577.71 65.96,1577.82 66.84,1578.04 67.70,1578.30 68.47,1578.52 69.12,1578.65 69.65,1578.68 70.10,1578.63 70.50,1578.53 70.86,1578.40 71.20,1578.24 71.53,1578.07 71.85,1577.89 72.17,1577.70 72.48,1577.50 72.79,1577.28 73.09,1577.04 73.37,1576.75 73.63,1576.38 73.87,1575.90 74.08,1575.28 74.28,1574.50 74.49,1573.63 74.74,1572.76 75.05,1571.99 75.43,1571.38 75.86,1570.93 76.34,1570.62 76.83,1570.40 77.34,1570.26 77.86,1570.17 78.38,1570.12 78.90,1570.10 79.42,1570.12 79.94,1570.17 80.46,1570.26 80.97,1570.40 81.46,1570.62 81.94,1570.93 82.37,1571.38 82.75,1571.99 83.06,1572.76 83.31,1573.63 83.52,1574.50 83.72,1575.28 83.93,1575.90 84.17,1576.38 84.43,1576.75 84.71,1577.04 85.01,1577.28 85.32,1577.50 85.63,1577.70 85.95,1577.89 86.27,1578.07 86.60,1578.24 86.94,1578.40 87.30,1578.53 87.70,1578.63 88.15,1578.68 88.68,1578.65 89.33,1578.52 90.10,1578.30 90.96,1578.04 91.84,1577.82 92.66,1577.71 93.38,1577.74 93.98,1577.89 94.49,1578.14 94.92,1578.46 95.30,1578.83 95.64,1579.23 95.94,1579.66 96.22,1580.10 96.47,1580.56 96.68,1581.04 96.86,1581.53 96.99,1582.05 97.05,1582.58 97.02,1583.15 96.85,1583.75 96.51,1584.38 96.00,1585.03 95.37,1585.69 94.72,1586.30 94.14,1586.86 93.71,1587.36 93.42,1587.80 93.23,1588.21 93.12,1588.61 93.06,1588.99 93.02,1589.36 93.00,1589.73" fill="none" stroke="#8e8e8e" stroke-width="4.1" stroke-linejoin="round"/><circle cx="78.9" cy="1590.1" r="5.9" fill="none" stroke="#8e8e8e" stroke-width="4.1"/></svg>
<div class="t" style="top:224.00px;font-size:24px;color:#506cf0;transform:scaleY(1.03);transform-origin:50% 20px;left:-321.00px;width:800px;text-align:center;">Workflows</div>
<div class="t" style="top:336.00px;font-size:24px;color:#8e8e8e;transform:scaleY(1.03);transform-origin:50% 20px;left:-321.00px;width:800px;text-align:center;">Knowledge</div>
<div class="t" style="top:448.00px;font-size:24px;color:#8e8e8e;transform:scaleY(1.03);transform-origin:50% 20px;left:-321.00px;width:800px;text-align:center;">Environment</div>
<div class="t" style="top:560.00px;font-size:24px;color:#8e8e8e;transform:scaleY(1.03);transform-origin:50% 20px;left:-321.00px;width:800px;text-align:center;">Settings</div>
<div class="t" style="top:672.00px;font-size:24px;color:#8e8e8e;transform:scaleY(1.03);transform-origin:50% 20px;left:-321.00px;width:800px;text-align:center;">Apps</div>
<div class="t" style="top:1513.80px;font-size:24px;color:#8e8e8e;transform:scaleY(1.03);transform-origin:50% 20px;left:-321.00px;width:800px;text-align:center;">Help</div>
<div class="t" style="top:1625.80px;font-size:24px;color:#8e8e8e;transform:scaleY(1.03);transform-origin:50% 20px;left:-321.00px;width:800px;text-align:center;">Workspace</div>
<div class="a" style="left:0.00px;top:0.00px;width:3024.00px;height:108.00px;background:#1f1f1f;border-bottom:2px solid #333333;"></div>
<svg class="a" style="left:0;top:0" width="3024" height="108"><path d="M70 39H106M70 51H106M70 63H106" stroke="#5069eb" stroke-width="4" stroke-linecap="round"/><polygon points="182,33.1 204.2,69.1 160.2,69.1" fill="#5267e4"/><circle cx="2912" cy="42" r="10" fill="none" stroke="#5069eb" stroke-width="4.1"/><path d="M2895.8 69A16.1 16.1 0 0 1 2928 69" fill="none" stroke="#5069eb" stroke-width="4.1" stroke-linecap="round"/><path d="M2956.6 45.7L2967.9 56.2L2979.5 45.7" fill="none" stroke="#5069eb" stroke-width="4.2" stroke-linecap="round" stroke-linejoin="round"/></svg>
<div class="t" style="top:25.20px;font-size:55.2px;color:#fff;letter-spacing:2.6px;left:220.80px;-webkit-text-stroke:1.1px;">Asgard</div>
<div class="t" style="top:34.80px;font-size:32px;color:#fff;transform:scaleY(1.03);transform-origin:0 27px;left:457.30px;-webkit-text-stroke:0.8px;">Project</div>
<div class="t" style="top:34.80px;font-size:32px;color:#fff;transform:scaleY(1.03);transform-origin:0 27px;left:621.30px;-webkit-text-stroke:0.8px;">MyProject</div>
<div class="t" style="top:34.80px;font-size:32px;color:#fff;transform:scaleY(1.03);transform-origin:0 27px;left:827.60px;-webkit-text-stroke:0.8px;">Collection</div>
<div class="t" style="top:34.80px;font-size:32px;color:#fff;transform:scaleY(1.03);transform-origin:0 27px;left:1031.00px;-webkit-text-stroke:0.8px;">Copy of 飯店QA</div>
<div class="t" style="top:30.30px;font-size:43px;color:#8f8f8f;left:190.50px;width:800px;text-align:center;transform:skewX(-6.5deg);-webkit-text-stroke:0;">/</div>
<div class="t" style="top:30.30px;font-size:43px;color:#8f8f8f;left:396.10px;width:800px;text-align:center;transform:skewX(-6.5deg);-webkit-text-stroke:0;">/</div>
<div class="t" style="top:30.30px;font-size:43px;color:#8f8f8f;left:600.50px;width:800px;text-align:center;transform:skewX(-6.5deg);-webkit-text-stroke:0;">/</div>
<div class="a" style="left:1318.30px;top:19.40px;width:383.40px;height:63.40px;border:2px solid #424242;border-radius:16px;"></div>
<div class="t" style="top:36.80px;font-size:28px;color:#fff;transform:scaleY(1.03);transform-origin:0 23px;left:1384.90px;-webkit-text-stroke:0.6px;">Copy of 飯店QA</div>
<svg class="a" style="left:1609.90px;top:39.00px;" width="16" height="24" viewBox="0 0 16 24"><path d="M2.8 8.7L8 3.5L13.2 8.7M2.8 15.3L8 20.5L13.2 15.3" fill="none" stroke="#969696" stroke-width="2.1"/></svg>
<div class="t" style="top:36.30px;font-size:30px;color:#8c8c8c;transform:scaleY(1.03);transform-origin:0 25px;left:2500.50px;">AsgardAI (Asgard Internal)</div>
<svg class="a" style="left:0;top:0" width="3024" height="1710"><path d="M0 1690V1710H20A20 20 0 0 1 0 1690Z" fill="#050c08"/><path d="M3024 1690V1710H3004A20 20 0 0 0 3024 1690Z" fill="#120d09"/><path d="M0.5 0V1690A19.5 19.5 0 0 0 20 1709.5H3004A19.5 19.5 0 0 0 3023.5 1690V0" fill="none" stroke="#424242" stroke-width="1"/></svg>
</div></body></html>
